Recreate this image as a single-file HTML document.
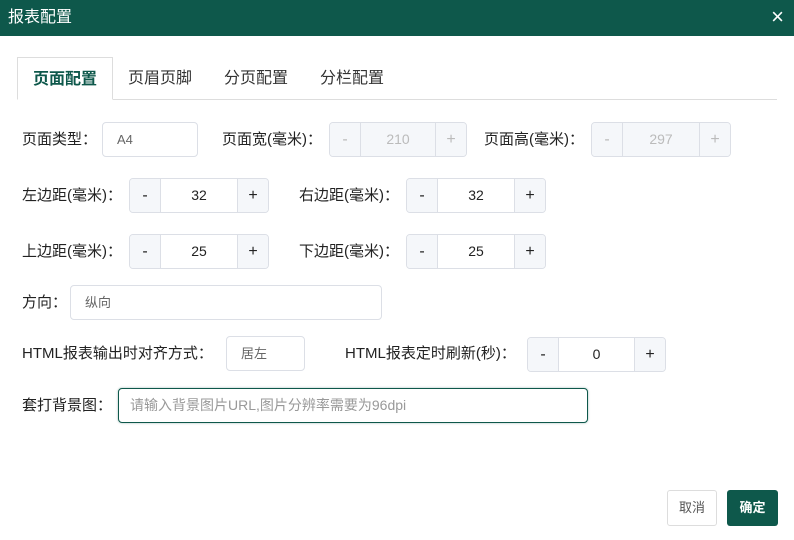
<!DOCTYPE html>
<html><head><meta charset="utf-8"><style>
*{box-sizing:border-box;margin:0;padding:0}
body{width:794px;height:540px;background:#fff;position:relative;overflow:hidden;font-family:"Liberation Sans","Noto Sans CJK SC",sans-serif;color:#222;font-size:15px}
.a{position:absolute}
.hdr{left:0;top:0;width:794px;height:36px;background:#0e584b;color:#fff;font-size:16px;line-height:36px;padding-left:8px}
.x{right:10px;top:0;line-height:34px;font-size:22px;color:#fff;font-weight:300}
.tab{top:57px;height:43px;line-height:44px;font-size:16px;color:#333}
.lbl{font-size:15px;line-height:35px;height:35px}
.in{height:35px;border:1px solid #dcdfe6;border-radius:4px;font-size:13px;color:#666;line-height:33px;padding-left:14px;background:#fff}
.sp{height:35px;border:1px solid #dcdfe6;border-radius:4px;display:flex;overflow:hidden;font-size:14px}
.sp .b{width:30px;background:#f5f7fa;text-align:center;line-height:33px;font-size:16px}
.sp .v{flex:1;text-align:center;line-height:33px;border-left:1px solid #dcdfe6;border-right:1px solid #dcdfe6;background:#fff}
.dis .b,.dis .v{background:#f5f7fa;color:#bbb}
.btn{top:490px;height:36px;border-radius:3px;font-size:13px;line-height:36px;text-align:center}
</style></head><body>
<div class="a hdr">报表配置</div>
<div class="a x">×</div>
<div class="a" style="left:17px;top:99px;width:760px;border-top:1px solid #ddd"></div>
<div class="a tab" style="left:17px;width:96px;border:1px solid #ddd;border-bottom:1px solid #fff;background:#fff;text-align:center;color:#0e584b;font-weight:bold">页面配置</div>
<div class="a tab" style="left:128px">页眉页脚</div>
<div class="a tab" style="left:224px">分页配置</div>
<div class="a tab" style="left:320px">分栏配置</div>

<div class="a lbl" style="left:22px;top:122px">页面类型：</div>
<div class="a in" style="left:102px;top:122px;width:96px">A4</div>
<div class="a lbl" style="left:222px;top:122px">页面宽(毫米)：</div>
<div class="a sp dis" style="left:329px;top:122px;width:138px"><div class="b">-</div><div class="v">210</div><div class="b">+</div></div>
<div class="a lbl" style="left:484px;top:122px">页面高(毫米)：</div>
<div class="a sp dis" style="left:591px;top:122px;width:140px"><div class="b">-</div><div class="v">297</div><div class="b">+</div></div>

<div class="a lbl" style="left:22px;top:178px">左边距(毫米)：</div>
<div class="a sp" style="left:129px;top:178px;width:140px"><div class="b">-</div><div class="v">32</div><div class="b">+</div></div>
<div class="a lbl" style="left:299px;top:178px">右边距(毫米)：</div>
<div class="a sp" style="left:406px;top:178px;width:140px"><div class="b">-</div><div class="v">32</div><div class="b">+</div></div>

<div class="a lbl" style="left:22px;top:234px">上边距(毫米)：</div>
<div class="a sp" style="left:129px;top:234px;width:140px"><div class="b">-</div><div class="v">25</div><div class="b">+</div></div>
<div class="a lbl" style="left:299px;top:234px">下边距(毫米)：</div>
<div class="a sp" style="left:406px;top:234px;width:140px"><div class="b">-</div><div class="v">25</div><div class="b">+</div></div>

<div class="a lbl" style="left:22px;top:285px">方向：</div>
<div class="a in" style="left:70px;top:285px;width:312px">纵向</div>

<div class="a lbl" style="left:22px;top:336px">HTML报表输出时对齐方式：</div>
<div class="a in" style="left:226px;top:336px;width:79px">居左</div>
<div class="a lbl" style="left:345px;top:336px">HTML报表定时刷新(秒)：</div>
<div class="a sp" style="left:527px;top:337px;width:139px"><div class="b">-</div><div class="v">0</div><div class="b">+</div></div>

<div class="a lbl" style="left:22px;top:388px">套打背景图：</div>
<div class="a in" style="left:118px;top:388px;width:470px;border-color:#0e584b;color:#999;box-shadow:0 0 2px rgba(14,88,75,.4);padding-left:11px;font-size:14px">请输入背景图片URL,图片分辨率需要为96dpi</div>

<div class="a btn" style="left:667px;width:50px;border:1px solid #ddd;color:#555;line-height:34px">取消</div>
<div class="a btn" style="left:727px;width:51px;background:#0e584b;color:#fff;font-weight:bold">确定</div>
</body></html>
